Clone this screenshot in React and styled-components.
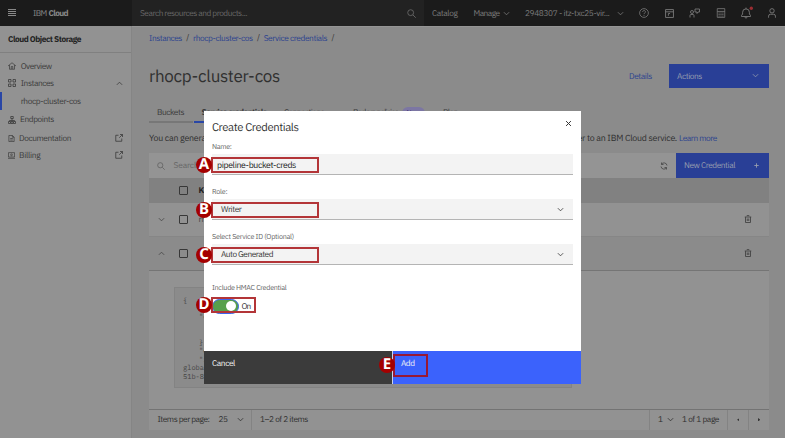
import React, { useLayoutEffect, useRef, useState } from 'react';
import styled, { createGlobalStyle } from 'styled-components';

const Global = createGlobalStyle`
  * { box-sizing: border-box; }
  html, body { margin: 0; width: 785px; height: 438px; overflow: hidden; }
  body { font-family: "IBM Plex Sans", Roboto, "Liberation Sans", sans-serif; font-size: 8.5px; line-height: 10px; color: #303030; background: #8b8b8b; text-rendering: geometricPrecision; }
  svg { display: block; flex: none; }
`;

const Label = styled.span`
  display: inline-block;
  flex: none;
  white-space: pre;
  font-size: ${p => p.$size || 8.3}px;
  line-height: ${p => (p.$size > 9 ? '1.25' : '10px')};
  padding-top: ${p => (p.$size && p.$size !== 8.8 ? 0 : 1.5)}px;
  font-weight: ${p => p.$weight || 400};
  color: ${p => p.$color || 'inherit'};
  font-family: ${p => (p.$mono ? '"IBM Plex Mono", "Liberation Mono", monospace' : 'inherit')};
`;

/* A label whose tracking is adjusted so that it fills a given measure. */
function Text({ w, size, weight, color, mono, children }) {
  const ref = useRef(null);
  const [tracking, setTracking] = useState(0);
  useLayoutEffect(() => {
    if (!w) return;
    const natural = ref.current.getBoundingClientRect().width;
    setTracking((w - natural) / ref.current.textContent.length);
  }, [w]);
  return (
    <Label ref={ref} $size={size} $weight={weight} $color={color} $mono={mono} style={{ letterSpacing: tracking }}>
      {children}
    </Label>
  );
}

const Page = styled.div`
  position: relative; width: 785px; height: 438px; overflow: hidden;
  display: flex; flex-direction: column; background: #8b8b8b;
`;
const Header = styled.header`
  height: 26px; flex: none; display: flex; background: #1b1b1b; color: #7b7b7b;
`;
const Brand = styled.div`
  width: 132px; padding-left: 8px; display: flex; align-items: center; gap: 17px; color: #888;
`;
const BrandName = styled.div`display: flex; gap: 2px;`;
const Search = styled.div`
  width: 292px; padding: 0 8px 0 8px; display: flex; align-items: center; justify-content: space-between;
  background: #222; color: #686868;
`;
const TopNav = styled.nav`flex: 1; display: flex; align-items: center; padding-left: 8px;`;
const NavLink = styled.div`
  display: flex; align-items: center; gap: ${p => p.$gap || 0}px; width: ${p => p.$w}px;
`;
const IconStrip = styled.div`display: flex; align-items: center;`;
const IconSlot = styled.div`width: 25.6px; display: flex; justify-content: center;`;

const Body = styled.div`flex: 1; display: flex; min-height: 0;`;
const Sidebar = styled.aside`
  width: 132px; flex: none; background: #929292; border-right: 1px solid #858585; display: flex; flex-direction: column; color: #3b3b3b;
`;
const SideTitle = styled.div`
  height: 26.5px; display: flex; align-items: center; padding-left: 8px; border-bottom: 1px solid #808080; color: #222; margin-bottom: 4.5px;
`;
const SideItem = styled.div`
  height: ${p => p.$h || 17.6}px; display: flex; align-items: center; gap: ${p => p.$gap || 4}px; padding: 0 8px 0 8px;
  svg:last-child { margin-left: ${p => (p.$end ? 'auto' : '0')}; }
`;
const SideChild = styled.div`
  height: 17.5px; display: flex; align-items: center; padding-left: 18.7px; border-left: 2px solid #2946a6;
`;

const Main = styled.main`
  flex: 1; padding: 0 16.5px 0 17px; display: flex; flex-direction: column; min-width: 0; border-top: 1px solid #959595;
`;
const Crumbs = styled.div`
  height: 21.5px; display: flex; align-items: center; gap: 4.3px; color: #2b438f;
`;
const Slash = styled.span`color: #333; width: 2.5px; font-size: 8px; padding-top: 1px;`;
const TitleRow = styled.div`
  height: 24.5px; margin-top: 15px; display: flex; align-items: center; justify-content: space-between;
`;
const Title = styled.div`padding-top: 2px;`;
const TitleActions = styled.div`display: flex; align-items: center; gap: 17px; height: 100%;`;
const Button = styled.div`
  width: ${p => p.$w}px; height: 100%; background: #293f96; color: #969daf;
  display: flex; align-items: center; justify-content: space-between; padding: 0 10px 0 8px; flex: none;
`;
const Tabs = styled.div`height: 20px; margin-top: 15px; display: flex; color: #3a3a3a;`;
const Tab = styled.div`
  width: ${p => p.$w}px; margin-right: 1px; padding: 1px 0 0 8px; flex: none; display: flex; align-items: center; gap: 4px;
  border-bottom: 2px solid ${p => (p.$on ? '#2946a6' : '#777')};
`;
const Tag = styled.span`
  width: 23px; height: 12px; border-radius: 6px; background: #7c76a3; color: #44377e; display: flex; align-items: center; justify-content: center;
`;
const Intro = styled.div`height: 30px; display: flex; align-items: center; gap: 2px; white-space: nowrap;`;

const Toolbar = styled.div`
  height: 25px; flex: none; display: flex; background: #949494; align-items: center; padding-left: 8px; color: #666;
`;
const ToolbarSearch = styled.div`flex: 1; display: flex; align-items: center; gap: 8.5px;`;
const RefreshSlot = styled.div`padding-right: 8.5px; color: #444;`;
const Row = styled.div`
  height: ${p => p.$h}px; flex: none; display: flex; align-items: center; background: ${p => p.$bg};
  border-bottom: 1px solid ${p => p.$line}; color: #444; padding: 0 17px 0 8px;
`;
const ToggleCell = styled.div`width: 22px; padding-left: 0.5px;`;
const CheckCell = styled.div`width: 19.5px;`;
const Check = styled.div`width: 9px; height: 9px; border: 1px solid #373737; border-radius: 1px;`;
const RowEnd = styled.div`margin-left: auto;`;
const Detail = styled.div`height: 138px; flex: none; background: #929292; padding: 16.5px 0 0 25px;`;
const Code = styled.div`
  width: 398px; height: 101px; background: #8b8b8b; border: 1px solid #838383; padding: 8px 0 0 8px;
  display: grid; grid-template-rows: 16px 25.7px 8.5px 8.8px 8.3px 8.5px; color: #444;
`;
const CodeLine = styled.div`padding-left: ${p => p.$in || 0}px; white-space: pre; line-height: 8px;`;
const Pager = styled.div`
  height: 21px; flex: none; background: #929292; border-top: 1px solid #737373; display: flex; color: #2f2f2f;
`;
const PagerCell = styled.div`
  width: ${p => p.$w}px; flex: none; display: flex; align-items: center; padding-left: ${p => p.$pad}px;
  gap: ${p => p.$gap || 0}px; border-left: ${p => (p.$line ? '1px solid #838383' : '0')};
  margin-left: ${p => (p.$push ? 'auto' : '0')};
`;

const Modal = styled.section`
  position: absolute; left: 204px; top: 111px; width: 377px; height: 273px; background: #fff;
  display: flex; flex-direction: column; color: #333;
`;
const ModalHead = styled.div`
  height: 31px; display: flex; justify-content: space-between; padding: 9px 9px 0 8px;
`;
const ModalTitle = styled.div`padding-top: 0.5px;`;
const ModalBody = styled.div`flex: 1; padding: 0 8px; display: flex; flex-direction: column;`;
const FieldLabel = styled.div`height: ${p => p.$h || 12}px; flex: none; display: flex; color: #666;`;
const Field = styled.div`
  height: 21px; flex: none; background: #f3f3f3; border-bottom: 1px solid #b4b4b4; display: flex; align-items: center;
  justify-content: space-between; padding: ${p => (p.$input ? '3.5px 9px 0 5px' : '0 9px 0 9px')}; margin-bottom: ${p => p.$mb}px;
`;
const SwitchRow = styled.div`display: flex; align-items: center; gap: 3px; margin-top: 5px;`;
const Switch = styled.div`
  width: 26.5px; height: 15px; border-radius: 8px; border: 1px solid #3c65f0; background: #57a04c;
  display: flex; align-items: center; justify-content: flex-end; padding-right: 2px;
`;
const Knob = styled.div`width: 10px; height: 10px; border-radius: 50%; background: #fff;`;
const ModalFoot = styled.div`height: 33px; flex: none; display: flex;`;
const FootButton = styled.div`
  flex: 1; padding: 6.5px 0 0 8px; color: #f4f4f4; background: ${p => (p.$primary ? '#3b62fc' : '#3b3b3b')};
  border-left: ${p => (p.$primary ? '1px solid #cbd3ee' : '0')};
`;

const Outline = styled.div`
  position: absolute; left: ${p => p.$x}px; top: ${p => p.$y}px; width: ${p => p.$w}px; height: ${p => p.$h}px;
  border: 2px solid ${p => p.$color || '#b33538'};
`;
const Badge = styled.div`
  position: absolute; left: ${p => p.$x - 8}px; top: ${p => p.$y - 8}px; width: 16px; height: 16px; border-radius: 50%;
  background: #a40000; color: #fff; display: flex; align-items: center; justify-content: center;
  font: 700 15px/15px "Noto Sans", sans-serif; padding-bottom: 1px;
`;

function Icon({ size = 10, children, sw = 1 }) {
  return (
    <svg width={size} height={size} viewBox="0 0 16 16" fill="none" stroke="currentColor" strokeWidth={sw * 16 / size}>
      {children}
    </svg>
  );
}
const Chevron = ({ up, size = 7 }) => (
  <Icon size={size} sw={0.8}><path d={up ? 'M2 11L8 5l6 6' : 'M2 5l6 6 6-6'} /></Icon>
);
const Magnifier = ({ size = 9 }) => <Icon size={size} sw={0.9}><circle cx="6.5" cy="6.5" r="5.2" /><path d="M10.5 10.5L15.5 15.5" /></Icon>;
const Menu = () => (
  <svg width="8" height="8" viewBox="0 0 8 8" stroke="currentColor" strokeWidth="1"><path d="M0 .5h8M0 2.5h8M0 4.5h8M0 6.5h8" shapeRendering="crispEdges" /></svg>
);
const Help = () => (
  <Icon size={10} sw={0.8}><circle cx="8" cy="8" r="7" /><path d="M5.8 6.4c0-3 4.6-3 4.6-.2C10.4 8 8 7.7 8 9.7M8 11v1.6" /></Icon>
);
const Panel = () => <Icon size={9} sw={0.9}><path d="M1 1h14v14H1zM1 5h14M6 8v4M6 8h3" /></Icon>;
const Feedback = () => (
  <svg width="11" height="10" viewBox="0 0 22 20" fill="none" stroke="currentColor" strokeWidth="1.7">
    <circle cx="6" cy="8" r="3" /><path d="M2 19v-4q0-2 2-2h4q2 0 2 2v4M12 2h9v6h-3l-2 3v-3h-4z" />
  </svg>
);
const Calculator = () => (
  <Icon size={10} sw={0.8}><path d="M2 1h12v14H2zM2 5.5h12" /><path d="M4 8h8M4 10.5h8M4 13h8" strokeDasharray="2 1" /></Icon>
);
const Bell = () => (
  <svg width="14" height="14" viewBox="0 0 14 14" fill="none" stroke="currentColor" strokeWidth=".9">
    <path d="M2.5 10.5h9v-1L10.4 8V6.3a3.4 3.4 0 0 0-6.8 0V8L2.5 9.5zM7 1.6v1.3M5.5 11q1.5 2.4 3 0" />
    <circle cx="12.3" cy="2.3" r="1.7" fill="#9b2d32" stroke="none" />
  </svg>
);
const User = () => <Icon size={10} sw={0.9}><circle cx="8" cy="4.5" r="3.5" /><path d="M2.5 15.5V13q0-3 3-3h5q3 0 3 3v2.5" /></Icon>;
const Home = () => <Icon size={8} sw={0.7}><path d="M0 8l8-6.5L16 8M3 6v8.5h10V6M6.5 14V9h3v5" /></Icon>;
const Squares = () => <Icon size={8} sw={0.8}><path d="M1 1h5v5H1zM10 1h5v5h-5zM1 10h5v5H1zM10 10h5v5h-5z" /></Icon>;
const Network = () => <Icon size={8} sw={0.8}><path d="M5.5 1h5v4h-5zM8 5v4M3 11V9h10v2M1 11h4v4H1zM6 11h4v4H6zM11 11h4v4h-4z" /></Icon>;
const Doc = () => <Icon size={7} sw={0.7}><path d="M2 1h8l4 4v10H2zM10 1v4h4M5 8h6M5 11.5h6" /></Icon>;
const Bill = () => <Icon size={7} sw={0.7}><path d="M1 1.5h14v10H1zM0 14.5h16" /><circle cx="8" cy="6.5" r="2" /></Icon>;
const Launch = () => <Icon size={8} sw={0.8}><path d="M7 2.5H1.5v12h12V9M10 1h5v5M15 1L8.5 7.5" /></Icon>;
const Refresh = () => <Icon size={8} sw={0.8}><path d="M14 7A6 6 0 0 0 3 4.5M3 1v4h4M2 9a6 6 0 0 0 11 2.5M13 15v-4H9" /></Icon>;
const Plus = () => <Icon size={5} sw={0.9}><path d="M8 1v14M1 8h14" /></Icon>;
const Trash = () => <Icon size={8} sw={0.9}><path d="M1.5 4h13M3 4v11h10V4M5.5 1.2h5M6.5 7v5M9.5 7v5" /></Icon>;
const Close = () => <Icon size={7} sw={1}><path d="M2.5 2.5l11 11M13.5 2.5l-11 11" /></Icon>;
const Arrow = ({ right }) => (
  <svg width="2.5" height="3.5" viewBox="0 0 3 4" fill="#333"><path d={right ? 'M0 0L3 2 0 4z' : 'M3 0L0 2l3 2z'} /></svg>
);

const tools = [Help, Panel, Feedback, Calculator, Bell, User];

const steps = [
  { id: 'A', x: 204, y: 165, box: [211, 157, 108, 16] },
  { id: 'B', x: 204, y: 210, box: [211, 202, 108, 16] },
  { id: 'C', x: 204, y: 255, box: [211, 247, 108, 16] },
  { id: 'D', x: 204, y: 305, box: [211, 297, 45, 16] },
  { id: 'E', x: 387, y: 365, box: [393, 354, 35, 23], color: '#981835' },
];

export default function App() {
  return (
    <Page>
      <Global />
      <Header>
        <Brand>
          <Menu />
          <BrandName><Text w={13.5}>IBM</Text><Text w={19.5} weight={700}>Cloud</Text></BrandName>
        </Brand>
        <Search><Text w={107}>Search resources and products...</Text><Magnifier /></Search>
        <TopNav>
          <NavLink $w={41.5}><Text w={25.5}>Catalog</Text></NavLink>
          <NavLink $w={51.5} $gap={3}><Text w={26}>Manage</Text><Chevron /></NavLink>
          <NavLink $w={106} $gap={7}><Text w={84.5}>2948307 - itz-txc25-vir...</Text><Chevron /></NavLink>
          <IconStrip>{tools.map((Tool, i) => <IconSlot key={i}><Tool /></IconSlot>)}</IconStrip>
        </TopNav>
      </Header>
      <Body>
        <Sidebar>
          <SideTitle><Text w={73} weight={700}>Cloud Object Storage</Text></SideTitle>
          <SideItem $gap={4.7}><Home /><Text w={31}>Overview</Text></SideItem>
          <SideItem $gap={4.7} $end><Squares /><Text w={33}>Instances</Text><Chevron up /></SideItem>
          <SideChild><Text w={60}>rhocp-cluster-cos</Text></SideChild>
          <SideItem $h={20}><Network /><Text w={34}>Endpoints</Text></SideItem>
          <SideItem $h={17} $end><Doc /><Text w={52}>Documentation</Text><Launch /></SideItem>
          <SideItem $end><Bill /><Text w={21.5}>Billing</Text><Launch /></SideItem>
        </Sidebar>
        <Main>
          <Crumbs>
            <Text w={33}>Instances</Text><Slash>/</Slash>
            <Text w={59.5}>rhocp-cluster-cos</Text><Slash>/</Slash>
            <Text w={63.5}>Service credentials</Text><Slash>/</Slash>
          </Crumbs>
          <TitleRow>
            <Title><Text w={131} size={17}>rhocp-cluster-cos</Text></Title>
            <TitleActions>
              <Text w={23} color="#2b438f">Details</Text>
              <Button $w={99.5}><Text w={25}>Actions</Text><Chevron /></Button>
            </TitleActions>
          </TitleRow>
          <Tabs>
            <Tab $w={43.5}><Text w={27}>Buckets</Text></Tab>
            <Tab $w={81.5} $on><Text w={65} weight={700}>Service credentials</Text></Tab>
            <Tab $w={68}><Text w={40}>Connections</Text></Tab>
            <Tab $w={89}><Text w={45}>Backup policies</Text><Tag><Text size={7}>New</Text></Tag></Tab>
            <Tab $w={42}><Text w={15}>Plan</Text></Tab>
          </Tabs>
          <Intro>
            <Text w={528} size={8.8}>You can generate a new set of credentials for cases where you want to manually connect an app or external consumer to an IBM Cloud service.</Text>
            <Text w={38} color="#2b438f">Learn more</Text>
          </Intro>
          <Toolbar>
            <ToolbarSearch><Magnifier size={8} /><Text w={25}>Search</Text></ToolbarSearch>
            <RefreshSlot><Refresh /></RefreshSlot>
            <Button $w={92.5}><Text w={51}>New Credential</Text><Plus /></Button>
          </Toolbar>
          <Row $h={25} $bg="#818181" $line="#818181">
            <ToggleCell /><CheckCell><Check /></CheckCell><Text weight={700} color="#222">Key Name</Text>
          </Row>
          <Row $h={33.5} $bg="#929292" $line="#868686">
            <ToggleCell><Chevron /></ToggleCell><CheckCell><Check /></CheckCell><Text>rhocp-cos-creds</Text><RowEnd><Trash /></RowEnd>
          </Row>
          <Row $h={34} $bg="#8b8b8b" $line="#757575">
            <ToggleCell><Chevron up /></ToggleCell><CheckCell><Check /></CheckCell><Text>cos-creds</Text><RowEnd><Trash /></RowEnd>
          </Row>
          <Detail>
            <Code>
              <CodeLine><Text mono size={7}>{'{'}</Text></CodeLine>
              <CodeLine $in={16}><Text mono size={7}>"cos_hmac_keys": {'{'}</Text></CodeLine>
              <CodeLine $in={16}><Text mono size={7}>{'},'}</Text></CodeLine>
              <CodeLine $in={16}><Text mono size={7}>"endpoints":</Text></CodeLine>
              <CodeLine $in={16}><Text mono size={7}>"iam_apikey":</Text></CodeLine>
              <CodeLine><Text mono size={7}>global:a/9</Text></CodeLine>
              <CodeLine><Text mono size={7}>51b-84c2::</Text></CodeLine>
            </Code>
          </Detail>
          <Pager>
            <PagerCell $w={102} $pad={8.5} $gap={9}><Text w={52}>Items per page:</Text><Text w={9}>25</Text><Chevron /></PagerCell>
            <PagerCell $w={70} $pad={8} $line><Text w={48}>1–2 of 2 items</Text></PagerCell>
            <PagerCell $w={78} $pad={8} $gap={4.5} $line $push><Text w={4}>1</Text><Chevron /><PagerCell $w={46} $pad={4}><Text w={37}>1 of 1 page</Text></PagerCell></PagerCell>
            <PagerCell $w={20.5} $pad={8.5} $line><Arrow /></PagerCell>
            <PagerCell $w={21} $pad={9} $line><Arrow right /></PagerCell>
          </Pager>
        </Main>
      </Body>

      <Modal>
        <ModalHead><ModalTitle><Text w={86.5} size={11.3}>Create Credentials</Text></ModalTitle><Close /></ModalHead>
        <ModalBody>
          <FieldLabel><Text w={19.5} size={7.2}>Name:</Text></FieldLabel>
          <Field $input $mb={12}><Text w={79} size={8.7} color="#222">pipeline-bucket-creds</Text></Field>
          <FieldLabel><Text w={15.5} size={7.2}>Role:</Text></FieldLabel>
          <Field $mb={12}><Text w={20.5}>Writer</Text><Chevron /></Field>
          <FieldLabel><Text w={82} size={7.2}>Select Service ID (Optional)</Text></FieldLabel>
          <Field $mb={17.5}><Text w={52}>Auto Generated</Text><Chevron /></Field>
          <FieldLabel $h={11}><Text w={74.5} size={7.2}>Include HMAC Credential</Text></FieldLabel>
          <SwitchRow><Switch><Knob /></Switch><Text w={9}>On</Text></SwitchRow>
        </ModalBody>
        <ModalFoot>
          <FootButton><Text w={23}>Cancel</Text></FootButton>
          <FootButton $primary><Text w={13.5}>Add</Text></FootButton>
        </ModalFoot>
      </Modal>

      {steps.map(({ id, x, y, box, color }) => (
        <React.Fragment key={id}>
          <Outline $x={box[0]} $y={box[1]} $w={box[2]} $h={box[3]} $color={color} />
          <Badge $x={x} $y={y}>{id}</Badge>
        </React.Fragment>
      ))}
    </Page>
  );
}
